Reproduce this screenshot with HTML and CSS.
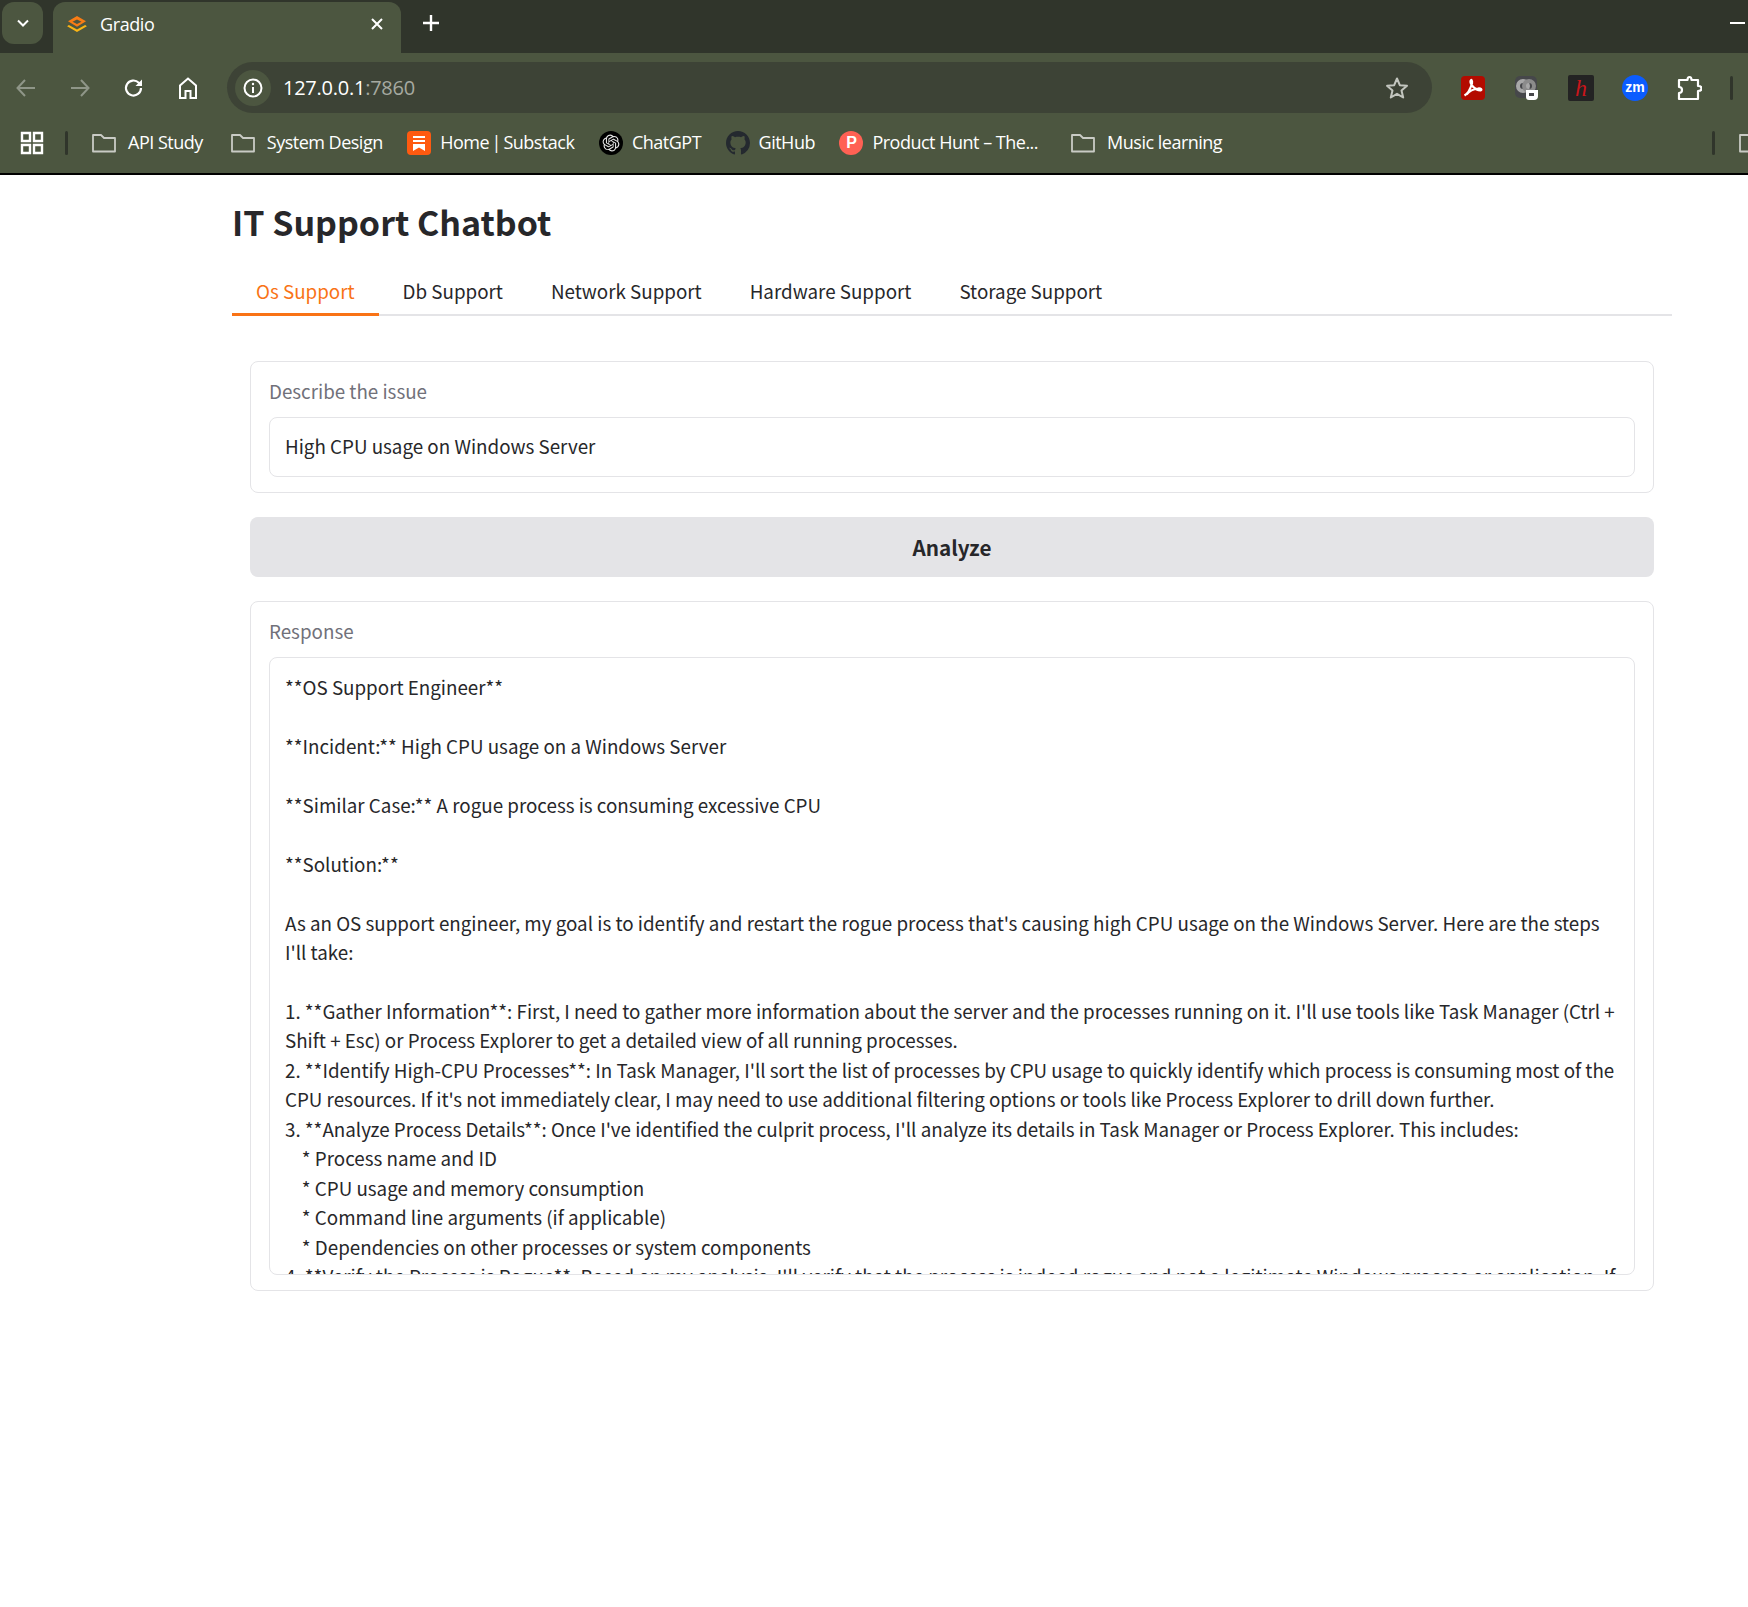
FILE: index.html
```html
<!DOCTYPE html>
<html lang="en">
<head>
    <meta charset="UTF-8">
    <title>Gradio</title>
    <link rel="stylesheet" href="styles.css">
</head>
<body>
    <!-- Browser chrome -->
    <div class="tabstrip">
        <div class="tab-search">
            <svg width="16" height="16" viewBox="0 0 16 16"><path d="M3 5.500 8 10.500 13 5.500" fill="none" stroke="#fff" stroke-width="2"/></svg>
        </div>
        <div class="tab">
            <svg class="tab-logo" width="22" height="18" viewBox="0 0 24 20">
                <path d="M12 1 22 7 12 13 2 7Z M12 5 7 7.500 12 10 17 7.500Z" fill="#f97c14" fill-rule="evenodd"/>
                <path d="M3 11 12 16 21 11 23 12.500 12 19 1 12.500Z" fill="#fbb514"/>
            </svg>
            <span class="tab-title">Gradio</span>
            <svg class="tab-close" width="14" height="14" viewBox="0 0 14 14"><path d="M2 2 12 12M12 2 2 12" stroke="#fff" stroke-width="2"/></svg>
        </div>
        <svg class="new-tab" width="18" height="18" viewBox="0 0 18 18"><path d="M9 1V17M1 9H17" stroke="#fff" stroke-width="2.400"/></svg>
        <div class="minimize"></div>
    </div>

    <div class="toolbar">
        <svg class="nav-icon" width="22" height="22" viewBox="0 0 22 22"><path d="M20 11H3M10 3 2.500 11 10 19" fill="none" stroke="#8f9688" stroke-width="2"/></svg>
        <svg class="nav-icon" width="22" height="22" viewBox="0 0 22 22"><path d="M2 11H19M12 3 19.500 11 12 19" fill="none" stroke="#8f9688" stroke-width="2"/></svg>
        <svg class="nav-icon" width="22" height="22" viewBox="0 0 22 22"><path d="M18 11a7.500 7.500 0 1 1-2.200-5.300L18 8" fill="none" stroke="#fff" stroke-width="2.200"/><path d="M19 2.500V9H12.500Z" fill="#fff"/></svg>
        <svg class="nav-icon" width="22" height="24" viewBox="0 0 22 24"><path d="M3 22V9.500L11 2.500 19 9.500V22H13.500V15H8.500V22Z" fill="none" stroke="#fff" stroke-width="2"/></svg>
        <div class="omnibox">
            <div class="site-info">
                <svg width="22" height="22" viewBox="0 0 22 22"><circle cx="11" cy="11" r="8.500" fill="none" stroke="#fff" stroke-width="2"/><path d="M11 10V16" stroke="#fff" stroke-width="2"/><circle cx="11" cy="7" r="1.200" fill="#fff"/></svg>
            </div>
            <span class="url">127.0.0.1<span class="url-port">:7860</span></span>
            <svg class="star" width="24" height="24" viewBox="0 0 24 24"><path d="M12 2.500 14.800 9.200 22 9.800 16.500 14.500 18.200 21.500 12 17.800 5.800 21.500 7.500 14.500 2 9.800 9.200 9.200Z" fill="none" stroke="#c3c6bf" stroke-width="2" stroke-linejoin="round"/></svg>
        </div>
        <div class="extensions">
            <svg width="26" height="26" viewBox="0 0 26 26"><rect x="1" y="1" width="24" height="24" rx="4" fill="#b30b00"/><path d="M4.500 20.500C8 18.500 10.500 13.500 12 8.500 12.500 5 11 4 10.500 6 10 9 14.500 15 20.500 15.500 22.500 15 21 13 18 13.500 14 14 9.500 16 6.500 19.500" fill="none" stroke="#fff" stroke-width="2.200"/></svg>
            <svg width="26" height="26" viewBox="0 0 26 26"><rect x="1" y="1" width="22" height="22" rx="5" fill="#46474a"/><circle cx="9" cy="11" r="5" fill="none" stroke="#a8a8a8" stroke-width="4"/><circle cx="15" cy="11" r="5" fill="none" stroke="#8b8b8b" stroke-width="4"/><path d="M12 15H24V21Q24 25 20 25H15Q12 25 12 22Z" fill="#fff"/><path d="M15 18H20V21H15Z" fill="#46474a"/></svg>
            <div class="ext-h"><span>h</span></div>
            <div class="ext-zm">zm</div>
            <svg width="26" height="26" viewBox="0 0 26 26"><path d="M8 5H11.500Q11.500 2 13.500 2T15.500 5H22V11Q25.500 11 25.500 13.500T22 16V24H3V18Q6 18 6 15T3 12V5Z" fill="none" stroke="#fff" stroke-width="2.200" stroke-linejoin="round"/></svg>
            <div class="sep"></div>
        </div>
    </div>

    <div class="bookmarks">
        <svg class="apps" width="24" height="24" viewBox="0 0 24 24"><path d="M2 2H10V10H2ZM14 2H22V10H14ZM2 14H10V22H2ZM14 14H22V22H14Z" fill="none" stroke="#fff" stroke-width="2.400"/></svg>
        <div class="sep"></div>
        <div class="bookmark folder-mark first">
            <svg class="folder" width="24" height="20" viewBox="0 0 24 20"><path d="M1 2H9L12 5H23V18.500H1Z" fill="none" stroke="#c9cbc5" stroke-width="1.800" stroke-linejoin="round"/></svg>
            <span>API Study</span>
        </div>
        <div class="bookmark folder-mark">
            <svg class="folder" width="24" height="20" viewBox="0 0 24 20"><path d="M1 2H9L12 5H23V18.500H1Z" fill="none" stroke="#c9cbc5" stroke-width="1.800" stroke-linejoin="round"/></svg>
            <span>System Design</span>
        </div>
        <div class="bookmark">
            <svg width="24" height="24" viewBox="0 0 24 24"><rect width="24" height="24" rx="4" fill="#ff5a10"/><path d="M6 5H18V7H6ZM6 9H18V11H6ZM6 13H18V20L12 16.500 6 20Z" fill="#fff"/></svg>
            <span class="tight">Home | Substack</span>
        </div>
        <div class="bookmark">
            <svg width="24" height="24" viewBox="0 0 24 24"><circle cx="12" cy="12" r="12" fill="#000"/><path transform="translate(3.600 3.600) scale(.7)" fill="#e6e6e6" d="M22.2819 9.8211a5.9847 5.9847 0 0 0-.5157-4.9108 6.0462 6.0462 0 0 0-6.5098-2.9A6.0651 6.0651 0 0 0 4.9807 4.1818a5.9847 5.9847 0 0 0-3.9977 2.9 6.0462 6.0462 0 0 0 .7427 7.0966 5.98 5.98 0 0 0 .511 4.9107 6.051 6.051 0 0 0 6.5146 2.9001A5.9847 5.9847 0 0 0 13.2599 24a6.0557 6.0557 0 0 0 5.7718-4.2058 5.9894 5.9894 0 0 0 3.9977-2.9001 6.0557 6.0557 0 0 0-.7475-7.0729zm-9.022 12.6081a4.4755 4.4755 0 0 1-2.8764-1.0408l.1419-.0804 4.7783-2.7582a.7948.7948 0 0 0 .3927-.6813v-6.7369l2.02 1.1686a.071.071 0 0 1 .038.052v5.5826a4.504 4.504 0 0 1-4.4945 4.4944zm-9.6607-4.1254a4.4708 4.4708 0 0 1-.5346-3.0137l.142.0852 4.783 2.7582a.7712.7712 0 0 0 .7806 0l5.8428-3.3685v2.3324a.0804.0804 0 0 1-.0332.0615L9.74 19.9502a4.4992 4.4992 0 0 1-6.1408-1.6464zM2.3408 7.8956a4.485 4.485 0 0 1 2.3655-1.9728V11.6a.7664.7664 0 0 0 .3879.6765l5.8144 3.3543-2.0201 1.1685a.0757.0757 0 0 1-.071 0l-4.8303-2.7865A4.504 4.504 0 0 1 2.3408 7.872zm16.5963 3.8558L13.1038 8.364 15.1192 7.2a.0757.0757 0 0 1 .071 0l4.8303 2.7913a4.4944 4.4944 0 0 1-.6765 8.1042v-5.6772a.79.79 0 0 0-.407-.667zm2.0107-3.0231l-.142-.0852-4.7735-2.7818a.7759.7759 0 0 0-.7854 0L9.409 9.2297V6.8974a.0662.0662 0 0 1 .0284-.0615l4.8303-2.7866a4.4992 4.4992 0 0 1 6.6802 4.66zM8.3065 12.863l-2.02-1.1638a.0804.0804 0 0 1-.038-.0567V6.0742a4.4992 4.4992 0 0 1 7.3757-3.4537l-.142.0805L8.704 5.459a.7948.7948 0 0 0-.3927.6813zm1.0976-2.3654l2.602-1.4998 2.6069 1.4998v2.9994l-2.5974 1.4997-2.6067-1.4997Z"/></svg>
            <span>ChatGPT</span>
        </div>
        <div class="bookmark">
            <svg width="24" height="24" viewBox="0 0 16 16"><path d="M8 0C3.580 0 0 3.580 0 8c0 3.540 2.290 6.530 5.470 7.590.4.070.55-.17.55-.38 0-.19-.01-.82-.01-1.490-2.010.37-2.530-.49-2.690-.94-.09-.23-.48-.94-.82-1.130-.28-.15-.68-.52-.01-.53.63-.01 1.080.58 1.230.82.72 1.210 1.870.87 2.330.66.07-.52.28-.87.51-1.070-1.780-.2-3.640-.89-3.640-3.950 0-.87.31-1.590.82-2.150-.08-.2-.36-1.020.08-2.120 0 0 .67-.21 2.200.82.64-.18 1.320-.27 2-.27.68 0 1.360.09 2 .27 1.530-1.040 2.200-.82 2.200-.82.44 1.100.16 1.920.08 2.120.51.56.82 1.270.82 2.150 0 3.070-1.870 3.750-3.650 3.950.29.25.54.73.54 1.480 0 1.070-.01 1.930-.01 2.200 0 .21.15.46.55.38A8.013 8.013 0 0016 8c0-4.420-3.580-8-8-8z" fill="#24292f"/></svg>
            <span>GitHub</span>
        </div>
        <div class="bookmark">
            <div class="ph-icon">P</div>
            <span>Product Hunt – The...</span>
        </div>
        <div class="bookmark folder-mark last">
            <svg class="folder" width="24" height="20" viewBox="0 0 24 20"><path d="M1 2H9L12 5H23V18.500H1Z" fill="none" stroke="#c9cbc5" stroke-width="1.800" stroke-linejoin="round"/></svg>
            <span>Music learning</span>
        </div>
        <div class="bookmarks-end">
            <div class="sep"></div>
            <svg class="folder" width="24" height="20" viewBox="0 0 24 20"><path d="M1 2H9L12 5H23V18.500H1Z" fill="none" stroke="#c9cbc5" stroke-width="1.800" stroke-linejoin="round"/></svg>
        </div>
    </div>

    <!-- Page -->
    <main class="app">
        <h1>IT Support Chatbot</h1>
        <div class="tabs">
            <a class="tab-btn selected">Os Support</a>
            <a class="tab-btn">Db Support</a>
            <a class="tab-btn">Network Support</a>
            <a class="tab-btn">Hardware Support</a>
            <a class="tab-btn">Storage Support</a>
        </div>
        <div class="panel">
            <div class="block">
                <div class="label">Describe the issue</div>
                <div class="field">High CPU usage on Windows Server</div>
            </div>
            <button class="analyze">Analyze</button>
            <div class="block">
                <div class="label">Response</div>
                <div class="field response">**OS Support Engineer**

**Incident:** High CPU usage on a Windows Server

**Similar Case:** A rogue process is consuming excessive CPU

**Solution:**

As an OS support engineer, my goal is to identify and restart the rogue process that's causing high CPU usage on the Windows Server. Here are the steps I'll take:

1. **Gather Information**: First, I need to gather more information about the server and the processes running on it. I'll use tools like Task Manager (Ctrl + Shift + Esc) or Process Explorer to get a detailed view of all running processes.
2. **Identify High-CPU Processes**: In Task Manager, I'll sort the list of processes by CPU usage to quickly identify which process is consuming most of the CPU resources. If it's not immediately clear, I may need to use additional filtering options or tools like Process Explorer to drill down further.
3. **Analyze Process Details**: Once I've identified the culprit process, I'll analyze its details in Task Manager or Process Explorer. This includes:
    * Process name and ID
    * CPU usage and memory consumption
    * Command line arguments (if applicable)
    * Dependencies on other processes or system components
4. **Verify the Process is Rogue**: Based on my analysis, I'll verify that the process is indeed rogue and not a legitimate Windows process or application. If</div>
            </div>
        </div>
    </main>
</body>
</html>
```

FILE: styles.css
```css
/* CSS styles */
body {
    margin: 0;
    background-color: #fff;
    font-family: "Noto Sans CJK SC", "Noto Sans", sans-serif;
    color: #27272a;
}

/* browser chrome */
.tabstrip {
    height: 53px;
    background-color: #30352b;
    display: flex;
    align-items: flex-start;
    overflow: hidden;
}
.tab-search {
    width: 41px;
    height: 42px;
    margin: 2px 10px 0 2px;
    border-radius: 12px;
    background-color: #4c5640;
    display: flex;
    align-items: center;
    justify-content: center;
}
.tab {
    width: 348px;
    height: 51px;
    margin-top: 2px;
    box-sizing: border-box;
    padding: 0 17px 8px 13px;
    border-radius: 12px 12px 0 0;
    background-color: #4c5640;
    display: flex;
    align-items: center;
}
.tab-title {
    margin-left: 12px;
    flex: 1;
    color: #fff;
    font: 18px "Open Sans", sans-serif;
    letter-spacing: -0.4px;
}
.new-tab {
    margin: 14px 0 0 21px;
}
.minimize {
    width: 15px;
    height: 2px;
    margin: 22px 3px 0 auto;
    background-color: #fff;
}
.toolbar {
    height: 60px;
    background-color: #4c5640;
    display: flex;
    align-items: center;
    box-sizing: border-box;
    padding: 9px 0 0 15px;
}
.nav-icon {
    margin-right: 32px;
}
.omnibox {
    width: 1205px;
    height: 51px;
    margin-left: -4px;
    border-radius: 26px;
    background-color: #3d4336;
    display: flex;
    align-items: center;
    box-sizing: border-box;
    padding: 0 23px 0 8px;
}
.site-info {
    width: 36px;
    height: 36px;
    border-radius: 50%;
    background-color: #4c5640;
    display: flex;
    align-items: center;
    justify-content: center;
}
.url {
    margin-left: 12px;
    flex: 1;
    color: #fff;
    font: 20px "Open Sans", sans-serif;
    letter-spacing: -0.25px;
}
.url-port {
    color: #a6aaa1;
}
.extensions {
    display: flex;
    align-items: center;
    gap: 28px;
    margin-left: 28px;
}
.ext-h {
    width: 26px;
    height: 26px;
    border-radius: 2px;
    background-color: #232323;
    display: flex;
    align-items: center;
    justify-content: center;
    color: #c9151b;
    font: italic 24px/26px "Liberation Serif", serif;
}
.ext-zm {
    width: 26px;
    height: 26px;
    border-radius: 50%;
    background-color: #0b5cff;
    color: #fff;
    text-align: center;
    font: bold 14px/24px "Liberation Sans", sans-serif;
}
.sep {
    width: 3px;
    height: 24px;
    border-radius: 2px;
    background-color: #30352b;
}
.bookmarks {
    height: 60px;
    background-color: #4c5640;
    border-bottom: 2px solid #000;
    display: flex;
    align-items: center;
    padding-left: 20px;
    overflow: hidden;
}
.apps {
    margin-right: 21px;
}
.bookmark {
    display: flex;
    align-items: center;
    gap: 9px;
    margin-left: 24.500px;
    color: #fff;
    font: 18px "Open Sans", sans-serif;
    letter-spacing: -0.5px;
    white-space: nowrap;
}
.bookmark span {
    padding-bottom: 2px;
}
.tight {
    word-spacing: -1.700px;
}
.folder-mark {
    gap: 12px;
    margin-left: 28px;
}
.folder-mark.first {
    margin-left: 24px;
}
.folder-mark.last {
    margin-left: 33px;
}
.ph-icon {
    width: 24px;
    height: 24px;
    border-radius: 50%;
    background-color: #ff6154;
    color: #fff;
    text-align: center;
    font: bold 16px/24px "Liberation Sans", sans-serif;
}
.bookmarks-end {
    display: flex;
    align-items: center;
    gap: 24px;
    margin-left: auto;
    margin-right: -15px;
}

/* page */
.app {
    width: 1440px;
    margin-left: 232px;
}
h1 {
    margin: 0;
    padding-top: 25px;
    font-size: 34px;
    font-weight: 600;
    line-height: 44px;
    color: #27272a;
}
.tabs {
    display: flex;
    margin-top: 28px;
    border-bottom: 2px solid #e4e4e7;
}
.tab-btn {
    padding: 0 24px;
    height: 44px;
    margin-bottom: -2px;
    font-size: 18.800px;
    line-height: 38px;
    box-sizing: border-box;
    color: #27272a;
}
.tab-btn.selected {
    color: #f97316;
    border-bottom: 3px solid #f97316;
}
.panel {
    padding: 45px 18px 0;
    display: flex;
    flex-direction: column;
    gap: 24px;
}
.block {
    border: 1px solid #e4e4e7;
    border-radius: 8px;
    padding: 14px 18px 15px;
}
.label {
    font-size: 18.800px;
    line-height: 30px;
    color: #71717a;
    margin-bottom: 11px;
}
.field {
    border: 1px solid #e4e4e7;
    border-radius: 8px;
    padding: 13px 15px;
    font-size: 18.800px;
    line-height: 29.450px;
    color: #27272a;
    height: 60px;
    box-sizing: border-box;
}
.response {
    height: 618px;
    padding-top: 14px;
    white-space: pre-wrap;
    overflow: hidden;
}
.analyze {
    height: 60px;
    border: none;
    border-radius: 8px;
    padding-bottom: 2px;
    background-color: #e4e4e7;
    color: #27272a;
    font-family: inherit;
    font-size: 20.700px;
    font-weight: 600;
}
```
